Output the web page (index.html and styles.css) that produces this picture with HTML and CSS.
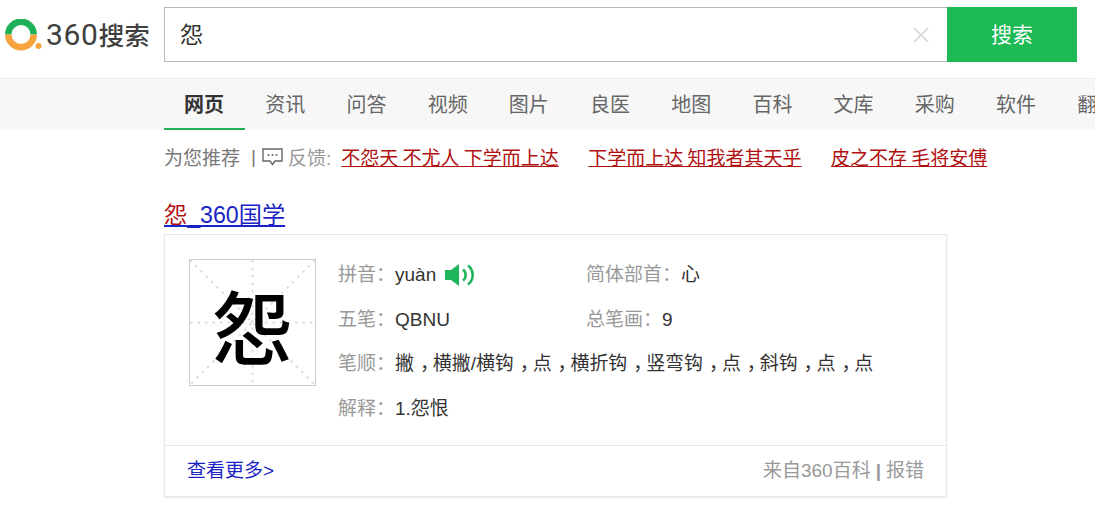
FILE: index.html
```html
<!DOCTYPE html>
<html lang="zh-CN">
<head>
<meta charset="utf-8">
<title>怨 - 360搜索</title>
<link rel="stylesheet" href="styles.css">
</head>
<body>
<header class="top">
  <a class="logo">
    <svg class="logo-mark" width="37" height="32" viewBox="0 0 37 32">
      <path d="M3.250 15.500a12.750 12.750 0 0 1 25.500 0" fill="none" stroke="#1fb157" stroke-width="6.500"/>
      <path d="M3.250 15.500a12.750 12.750 0 0 0 25.500 0" fill="none" stroke="#f7a43f" stroke-width="6.500"/>
      <circle cx="33.500" cy="27" r="3" fill="#f7a43f"/>
    </svg>
    <span class="logo-text"><span class="logo-num">360</span>搜索</span>
  </a>
  <form class="search">
    <div class="search-box">
      <span class="query">怨</span>
      <svg class="clear" width="16" height="16" viewBox="0 0 16 16"><path d="M1 1l14 14M15 1L1 15" stroke="#d4d4d4" stroke-width="1.600" fill="none"/></svg>
    </div>
    <button class="search-btn" type="button">搜索</button>
  </form>
</header>
<nav class="tabs">
  <a class="tab active">网页</a><a class="tab">资讯</a><a class="tab">问答</a><a class="tab">视频</a><a class="tab">图片</a><a class="tab">良医</a><a class="tab">地图</a><a class="tab">百科</a><a class="tab">文库</a><a class="tab">采购</a><a class="tab">软件</a><a class="tab">翻译</a>
</nav>
<main class="main">
  <div class="rec">
    <span class="rec-title">为您推荐</span>
    <span class="rec-sep">|</span>
    <svg class="rec-icon" width="21" height="19" viewBox="0 0 21 19"><path d="M1 2h19v12h-7l-2.500 3.500L8 14H1z" fill="none" stroke="#666" stroke-width="1.400"/><circle cx="6.500" cy="8" r="1" fill="#666"/><circle cx="10.500" cy="8" r="1" fill="#666"/><circle cx="14.500" cy="8" r="1" fill="#666"/></svg>
    <span class="rec-fb">反馈:</span>
    <a class="rec-link first">不怨天 不尤人 下学而上达</a>
    <a class="rec-link">下学而上达 知我者其天乎</a>
    <a class="rec-link">皮之不存 毛将安傅</a>
  </div>
  <h3 class="title"><a><em>怨</em>_360国学</a></h3>
  <section class="card">
    <div class="card-body">
      <div class="glyph">
        <svg class="glyph-grid" width="125" height="125" viewBox="0 0 125 125"><path d="M0 0L125 125M125 0L0 125M62.500 0V125M0 62.500H125" stroke="#dcdcdc" stroke-width="2" stroke-dasharray="2.500 5" fill="none"/></svg>
        <span class="glyph-char">怨</span>
      </div>
      <div class="info">
        <div class="row">
          <div class="cell"><span class="label">拼音：</span><span class="val">yuàn</span>
            <svg class="sound" width="30" height="24" viewBox="0 0 30 24"><path d="M0 7h6l8-6v22l-8-6H0z" fill="#1fb55a"/><path d="M18 6.500a7 7 0 0 1 0 11M23 2.500a12 12 0 0 1 0 19" fill="none" stroke="#1fb55a" stroke-width="2.600"/></svg>
          </div>
          <div class="cell"><span class="label">简体部首：</span><span class="val">心</span></div>
        </div>
        <div class="row">
          <div class="cell"><span class="label">五笔：</span><span class="val">QBNU</span></div>
          <div class="cell"><span class="label">总笔画：</span><span class="val">9</span></div>
        </div>
        <div class="row"><span class="label">笔顺：</span><span class="val seq">撇<i class="comma">，</i>横撇/横钩<i class="comma">，</i>点<i class="comma">，</i>横折钩<i class="comma">，</i>竖弯钩<i class="comma">，</i>点<i class="comma">，</i>斜钩<i class="comma">，</i>点<i class="comma">，</i>点</span></div>
        <div class="row"><span class="label">解释：</span><span class="val">1.怨恨</span></div>
      </div>
    </div>
    <footer class="card-foot">
      <a class="more">查看更多&gt;</a>
      <span class="source">来自360百科<b class="source-sep">|</b>报错</span>
    </footer>
  </section>
</main>
</body>
</html>
```
FILE: styles.css
```css
* { box-sizing: border-box; }
html, body { margin: 0; padding: 0; overflow: hidden; height: 100%; }
body { background: #fff; color: #333; font-family: Arial, "Liberation Sans", "Noto Sans CJK SC", sans-serif; }
.top { display: flex; align-items: flex-start; height: 79px; padding-top: 7px; border-bottom: 1px solid #ececec; }
.logo { display: flex; align-items: center; width: 164px; height: 55px; padding-left: 5px; }
.logo-mark { flex: none; }
.logo-text { margin-left: 4px; font-size: 25.500px; font-weight: 500; line-height: 30px; color: #404040; white-space: nowrap; font-family: "Noto Sans CJK SC", sans-serif; }
.logo-num { font-family: Roboto, sans-serif; font-size: 30px; font-weight: 400; letter-spacing: .7px; }
.search { display: flex; width: 913px; height: 55px; }
.search-box { flex: 1; display: flex; align-items: center; justify-content: space-between; padding: 0 18px 3px 15px; border: 1px solid #b8b8b8; border-right: 0; }
.query { font-size: 23px; color: #333; }
.clear { flex: none; margin-top: 3px; }
.search-btn { width: 130px; border: 0; padding: 0 0 4px; background: #1cb955; color: #fff; font: 21px "Liberation Sans", "Noto Sans CJK SC", sans-serif; }
.tabs { display: flex; height: 51px; padding-left: 163.500px; background: #f7f7f7; overflow: hidden; }
.tab { flex: none; width: 81.200px; height: 51px; line-height: 52px; text-align: center; font-size: 20px; color: #666; }
.tab.active { color: #333; font-weight: 700; border-bottom: 2px solid #1fb157; }
.main { padding-left: 164px; width: 947px; }
.rec { display: flex; align-items: center; height: 53px; font-size: 19px; white-space: nowrap; }
.rec-title { color: #777; }
.rec-sep { margin-left: 11px; color: #777; }
.rec-icon { flex: none; margin-left: 6px; }
.rec-fb { margin-left: 5px; color: #999; }
.rec-link { color: #b01010; text-decoration: underline; margin-left: 29.500px; word-spacing: -1px; }
.rec-link.first { margin-left: 10px; }
.title { margin: 19px 0 0; height: 32px; font-size: 23.200px; line-height: 27px; font-weight: 400; }
.title a { color: #1a23c4; text-decoration: underline; }
.title em { color: #b01010; font-style: normal; }
.card { height: 263px; border: 1px solid #e8e8e8; box-shadow: 0 1px 2px rgba(0,0,0,.08); }
.card-body { display: flex; height: 210px; padding: 24px 0 0 24px; }
.glyph { position: relative; flex: none; width: 127px; height: 127px; border: 1px solid #ccc; display: flex; align-items: center; justify-content: center; }
.glyph-grid { position: absolute; left: 0; top: 0; }
.glyph-char { position: relative; font-size: 80px; font-weight: 500; line-height: 1; color: #000; font-family: "Noto Sans CJK SC", sans-serif; }
.info { display: flex; flex-direction: column; gap: 14.500px; margin: 1px 0 0 22px; }
.row { display: flex; align-items: center; height: 30px; font-size: 19px; line-height: 30px; white-space: nowrap; }
.cell { display: flex; align-items: center; width: 248px; }
.label { color: #999; font-family: Arial, "Liberation Sans", "Noto Sans CJK TC", sans-serif; }
.val { color: #333; }
.seq { letter-spacing: -.08px; }
.comma { margin: 0 -6px 0 6px; font-style: normal; }
.sound { margin-left: 9px; }
.card-foot { display: flex; justify-content: space-between; align-items: center; height: 51px; padding: 0 22px 6px; border-top: 1px solid #e8e8e8; font-size: 19px; }
.more { color: #1a23c4; }
.source { color: #999; }
.source-sep { margin: 0 5px 0 5px; font-weight: 700; }
```
